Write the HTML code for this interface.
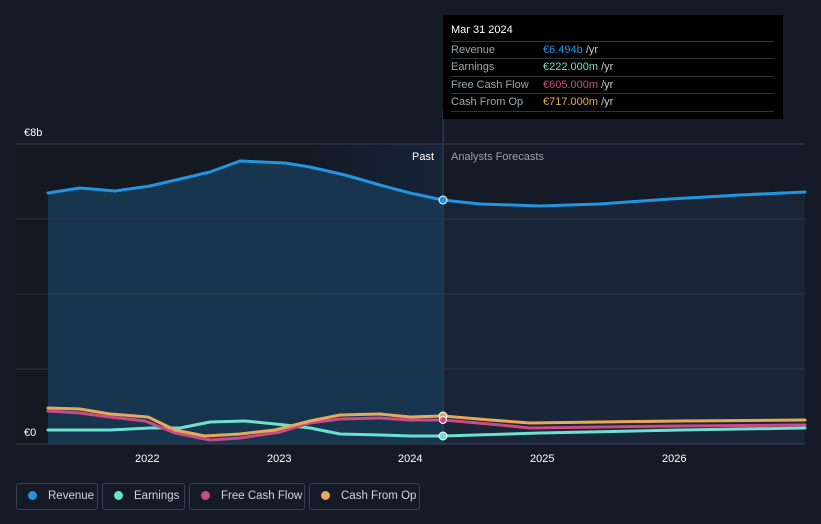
<!DOCTYPE html><html><head><style>
body{margin:0;background:#151b26;width:821px;height:524px;overflow:hidden;font-family:"Liberation Sans",sans-serif;position:relative}
.tt{position:absolute;left:443px;top:15px;width:340px;height:104px;background:#000;color:#fff;font-size:11px}
.row{position:absolute;left:8px;width:323px;border-top:1px solid #333;height:17px;line-height:17px;color:#9aa}
.row span{position:absolute;left:92px}
.lg{position:absolute;top:483px;height:27px;border:1px solid #3a4150;border-radius:3px;color:#cfd3da;font-size:11.5px;line-height:25px;box-sizing:border-box}
.lg i{display:inline-block;width:9px;height:9px;border-radius:50%;margin:0 11px 0 11px;vertical-align:-1px}
</style></head><body>
<svg width="821" height="524" style="position:absolute;left:0;top:0">
<defs><linearGradient id="bd" x1="0" x2="1"><stop offset="0" stop-color="#131a25"/><stop offset="1" stop-color="#172438"/></linearGradient></defs>
<rect x="16" y="144" width="295" height="300" fill="#131821"/>
<rect x="311" y="144" width="132" height="300" fill="url(#bd)"/>
<polygon fill="#17374f" opacity="0.95" points="48,193 80,188 115,191 150,186 210,172 240,161 285,163 310,167 345,175 380,185 410,193 443,200 443,444 48,444"/>
<polygon fill="#1a2535" points="443,200 480,204 540,206 600,204 670,199 740,195 805,192 805,444 443,444"/>
<g stroke="#2a3545" stroke-width="1"><line x1="16" y1="144" x2="805" y2="144" stroke="#3a4150"/><line x1="16" y1="219" x2="805" y2="219"/><line x1="16" y1="294" x2="805" y2="294"/><line x1="16" y1="369" x2="805" y2="369"/></g>
<line x1="16" y1="444" x2="805" y2="444" stroke="#3a4150"/>
<line x1="443" y1="110" x2="443" y2="444" stroke="#3a4150"/>
<g fill="none" stroke-width="3" stroke-linejoin="round" stroke-linecap="round">
<polyline stroke="#2394df" points="48,193 80,188 115,191 150,186 210,172 240,161 285,163 310,167 345,175 380,185 410,193 443,200 480,204 540,206 600,204 670,199 740,195 805,192"/>
<polyline stroke="#6ee0cf" points="48,430 110,430 150,428 180,428 210,422 245,421 285,425 310,428 340,434 380,435 410,436 443,436 540,433 680,430 805,428"/>
<polyline stroke="#c94b84" points="48,411 80,413 110,417 145,421 175,433 210,440 240,438 280,432 310,423 340,419 380,418 410,420 443,420 490,424 530,428 600,427 680,426 805,425"/>
<polyline stroke="#e6a95a" points="48,408 80,409 110,414 148,417 175,430 205,436 240,434 275,430 310,421 340,415 380,414 410,417 443,416 490,420 530,423 600,422 680,421 805,420"/>
</g>
<circle cx="443" cy="200" r="4" fill="#2394df" stroke="#fff"/>
<circle cx="443" cy="416" r="4" fill="#e6a95a" stroke="#fff"/>
<circle cx="443" cy="420" r="3.5" fill="#c94b84" stroke="#fff"/>
<circle cx="443" cy="436" r="4" fill="#6ee0cf" stroke="#fff"/>
<g fill="#fff" font-size="11" font-family="Liberation Sans"><text x="24" y="136">€8b</text><text x="24" y="436">€0</text>
<text x="135" y="462">2022</text><text x="267" y="462">2023</text><text x="398" y="462">2024</text><text x="530" y="462">2025</text><text x="662" y="462">2026</text>
<text x="412" y="160">Past</text><text x="451" y="160" fill="#9aa0a8">Analysts Forecasts</text></g>
</svg>
<div class="tt"><div style="position:absolute;left:8px;top:9px;font-size:11px">Mar 31 2024</div>
<div class="row" style="top:26px">Revenue<span style="color:#2394df">€6.494b <b style="font-weight:normal;color:#ccc">/yr</b></span></div>
<div class="row" style="top:43px">Earnings<span style="color:#6ee0cf">€222.000m <b style="font-weight:normal;color:#ccc">/yr</b></span></div>
<div class="row" style="top:61px">Free Cash Flow<span style="color:#c94b84">€605.000m <b style="font-weight:normal;color:#ccc">/yr</b></span></div>
<div class="row" style="top:78px">Cash From Op<span style="color:#e6a95a">€717.000m <b style="font-weight:normal;color:#ccc">/yr</b></span></div>
<div style="position:absolute;left:8px;width:323px;top:96px;border-top:1px solid #333"></div></div>
<div class="lg" style="left:16px;width:82px"><i style="background:#2394df"></i>Revenue</div>
<div class="lg" style="left:102px;width:83px"><i style="background:#6ee0cf"></i>Earnings</div>
<div class="lg" style="left:189px;width:116px"><i style="background:#c94b84"></i>Free Cash Flow</div>
<div class="lg" style="left:309px;width:111px"><i style="background:#e6a95a"></i>Cash From Op</div>
</body></html>
